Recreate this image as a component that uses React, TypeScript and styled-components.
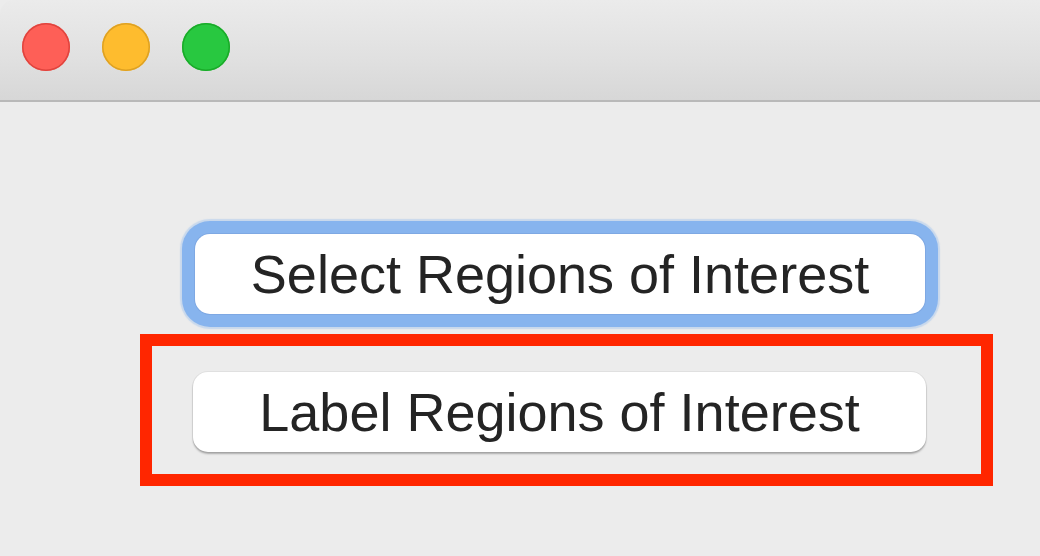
import React from "react";
import styled, { createGlobalStyle } from "styled-components";

const Global = createGlobalStyle`
  html, body { margin: 0; padding: 0; background: #ececec; }
  body { font-family: "Liberation Sans", Arial, sans-serif; }
`;

const Window = styled.div`
  width: 1040px;
  height: 556px;
  display: flex;
  flex-direction: column;
  background: #ececec;
  overflow: hidden;
`;

const TitleBar = styled.div`
  height: 102px;
  flex: none;
  display: flex;
  align-items: center;
  gap: 32px;
  padding-left: 22px;
  padding-bottom: 6px;
  box-sizing: border-box;
  background: linear-gradient(to bottom, #ebebeb 0%, #e0e0e0 60%, #d7d7d7 100%);
  border-bottom: 2px solid #b9b9b9;
  border-top-left-radius: 14px;
`;

const Light = styled.div<{ $fill: string; $edge: string }>`
  width: 48px;
  height: 48px;
  border-radius: 50%;
  background: ${(p) => p.$fill};
  box-shadow: inset 0 0 0 1.5px ${(p) => p.$edge};
`;

const Content = styled.div`
  display: flex;
  flex-direction: column;
  align-items: flex-start;
  padding: 132px 0 0 140px;
`;

const PushButton = styled.button<{ $focused?: boolean }>`
  width: ${(p) => (p.$focused ? "730px" : "733px")};
  height: 80px;
  margin-left: ${(p) => (p.$focused ? "55px" : "0")};
  border: none;
  border-radius: 15px;
  background: #ffffff;
  color: #242424;
  font-family: "Liberation Sans", Arial, sans-serif;
  font-size: 54px;
  line-height: 80px;
  padding: 0;
  text-align: center;
  box-shadow: ${(p) =>
    p.$focused
      ? "0 0 0 1px rgba(120,160,220,0.6), 0 0 0 13px #87b4ee, 0 0 1px 15px rgba(135,180,238,0.35)"
      : "0 0 0 1px rgba(0,0,0,0.05), 0 2px 2px rgba(0,0,0,0.28)"};
`;

const Annotation = styled.div`
  margin-top: 20px;
  border: 12px solid #ff2600;
  padding: 26px 55px 22px 41px;
`;

export default function App() {
  return (
    <>
      <Global />
      <Window>
        <TitleBar>
          <Light $fill="#fe5f57" $edge="#e0443e" />
          <Light $fill="#febc2e" $edge="#dea123" />
          <Light $fill="#28c840" $edge="#1aab29" />
        </TitleBar>
        <Content>
          <PushButton $focused>Select Regions of Interest</PushButton>
          <Annotation>
            <PushButton>Label Regions of Interest</PushButton>
          </Annotation>
        </Content>
      </Window>
    </>
  );
}
